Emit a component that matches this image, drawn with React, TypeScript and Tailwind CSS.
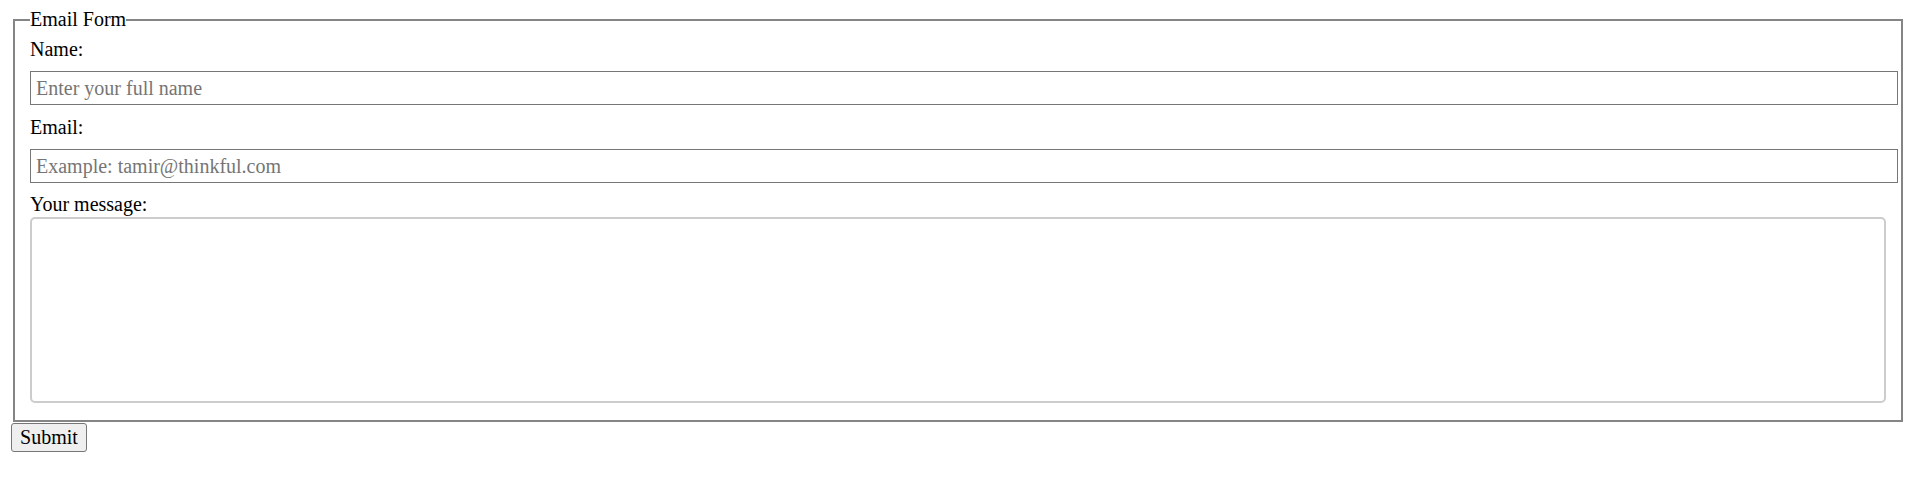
import React from "react";

export default function App() {
  return (
    <div className="min-h-[483px] bg-white pl-[11px] pt-[8px] font-['Liberation_Serif',serif] text-[20px] leading-[23px] text-black">
      <form onSubmit={(e) => e.preventDefault()}>
        <fieldset className="ml-[2px] mr-[9px] border-2 border-[#858585] px-[15px] pt-[7px] pb-[17px]">
          <legend className="leading-[23px]">Email Form</legend>
          <label className="block leading-[23px]">Name:</label>
          <input
            type="text"
            placeholder="Enter your full name"
            className="mt-[10px] block h-[34px] w-[calc(100%+12px)] border border-[#767676] bg-white px-[5px] text-[20px] leading-[23px] outline-none placeholder:text-[#757575]"
          />
          <label className="mt-[11px] block leading-[23px]">Email:</label>
          <input
            type="email"
            placeholder="Example: tamir@thinkful.com"
            className="mt-[10px] block h-[34px] w-[calc(100%+12px)] border border-[#767676] bg-white px-[5px] text-[20px] leading-[23px] outline-none placeholder:text-[#757575]"
          />
          <label className="mt-[10px] block leading-[23px]">Your message:</label>
          <textarea className="mt-[1px] block h-[186px] w-full resize-none rounded-[5px] border-2 border-[#cccccc] bg-white outline-none" />
        </fieldset>
        <button
          type="submit"
          className="mt-[1px] flex h-[29px] w-[76px] items-center justify-center rounded-[3px] border border-[#767676] bg-[#efefef] text-[20px] leading-[23px] text-black"
        >
          Submit
        </button>
      </form>
    </div>
  );
}
